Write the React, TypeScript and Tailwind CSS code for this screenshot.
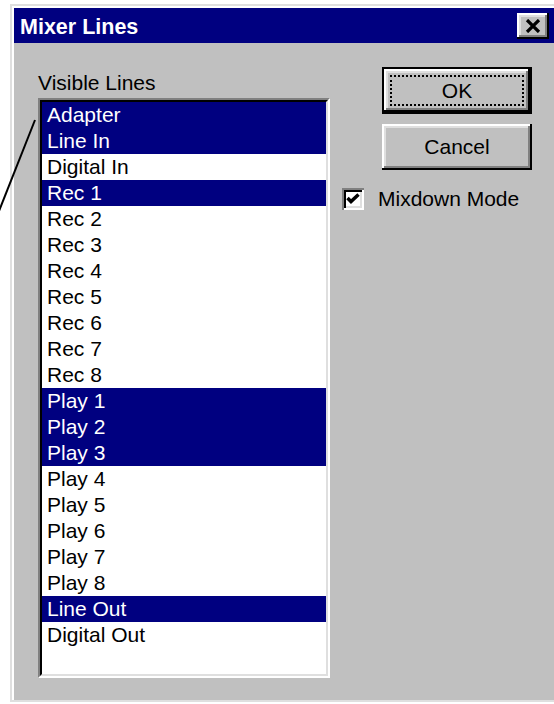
import * as React from "react";

type Line = {label: string; selected: boolean};

const lines: Line[] = [
    {label: "Adapter", selected: true},
    {label: "Line In", selected: true},
    {label: "Digital In", selected: false},
    {label: "Rec 1", selected: true},
    {label: "Rec 2", selected: false},
    {label: "Rec 3", selected: false},
    {label: "Rec 4", selected: false},
    {label: "Rec 5", selected: false},
    {label: "Rec 6", selected: false},
    {label: "Rec 7", selected: false},
    {label: "Rec 8", selected: false},
    {label: "Play 1", selected: true},
    {label: "Play 2", selected: true},
    {label: "Play 3", selected: true},
    {label: "Play 4", selected: false},
    {label: "Play 5", selected: false},
    {label: "Play 6", selected: false},
    {label: "Play 7", selected: false},
    {label: "Play 8", selected: false},
    {label: "Line Out", selected: true},
    {label: "Digital Out", selected: false},
];

// raised 3d bevel used by the push buttons
const bevel =
    "shadow-[inset_-2px_-2px_0_#000,inset_2px_2px_0_#fff,inset_-4px_-4px_0_#808080,inset_4px_4px_0_#dfdfdf]";

function CloseButton() {
    return (
        <button className={`flex items-center justify-center w-[32px] h-[26px] bg-[#c0c0c0] ${bevel}`}>
            <svg width="16" height="14" viewBox="0 0 16 14">
                <path d="M2 1 L14 13 M14 1 L2 13" stroke="#000" strokeWidth="3.2"/>
            </svg>
        </button>
    );
}

function PushButton({label, isDefault}: {label: string; isDefault?: boolean}) {
    if (isDefault) {
        return (
            <div className="w-[150px] h-[47px] border-2 border-black">
                <button className={`flex w-full h-full p-[6px] bg-[#c0c0c0] ${bevel}`}>
                    <span className="flex flex-1 items-center justify-center border-2 border-dotted border-black text-[21px] text-black">
                        {label}
                    </span>
                </button>
            </div>
        );
    }
    return (
        <button
            className={`flex items-center justify-center w-[150px] h-[46px] bg-[#c0c0c0] text-[21px] text-black ${bevel}`}>
            {label}
        </button>
    );
}

function MixerLinesList() {
    return (
        <div className="w-[292px] h-[580px] border-2 border-t-[#808080] border-l-[#808080] border-r-white border-b-white">
            <div className="h-full bg-white border-2 border-t-black border-l-black border-r-[#dfdfdf] border-b-[#dfdfdf]">
                {lines.map((line) => (
                    <div
                        key={line.label}
                        className={`h-[26px] pl-[5px] text-[21px] leading-[26px] whitespace-nowrap ${
                            line.selected ? "bg-[#000080] text-white" : "text-black"
                        }`}
                    >
                        {line.label}
                    </div>
                ))}
            </div>
        </div>
    );
}

export default function App() {
    return (
        <div
            className="relative w-[554px] h-[704px] overflow-hidden bg-white"
            style={{fontFamily: '"Liberation Sans", Arial, sans-serif'}}
        >
            <div className="ml-[10px] mt-[4px] w-[560px] h-[698px] border-l-2 border-t-2 border-b-2 border-[#dfdfdf]">
                <div className="flex flex-col h-full border-l-2 border-t-2 border-white bg-[#c0c0c0]">
                    {/* caption */}
                    <div className="flex items-center h-[35px] w-[556px] pl-[6px] bg-[#000080]">
                        <span className="flex-1 pt-[4px] leading-[31px] text-[21.5px] font-bold text-white">Mixer Lines</span>
                        <div className="w-[53px]">
                            <CloseButton/>
                        </div>
                    </div>

                    <div className="flex pl-[24px] pt-[24px]">
                        <div className="flex flex-col pt-[3px]">
                            <span className="text-[21px] leading-[26px] text-black">Visible Lines</span>
                            <div className="mt-[2px]">
                                <MixerLinesList/>
                            </div>
                        </div>

                        <div className="flex flex-col ml-[12px]">
                            <div className="flex flex-col gap-[10px] ml-[40px]">
                                <PushButton label="OK" isDefault/>
                                <PushButton label="Cancel"/>
                            </div>
                            <label className="flex items-center gap-[14px] mt-[16px]">
                                <span
                                    className="flex items-center justify-center w-[22px] h-[22px] bg-white shadow-[inset_2px_2px_0_#808080,inset_-2px_-2px_0_#fff,inset_4px_4px_0_#000,inset_-4px_-4px_0_#dfdfdf]">
                                    <svg width="14" height="12" viewBox="0 0 14 12">
                                        <path d="M1.5 5 L5 8.5 L12.5 1.5" fill="none" stroke="#000" strokeWidth="3.5"/>
                                    </svg>
                                </span>
                                <span className="text-[21px] leading-[26px] text-black">Mixdown Mode</span>
                            </label>
                        </div>
                    </div>
                </div>
            </div>

            {/* callout line pointing into the list */}
            <svg className="absolute left-0 top-0 pointer-events-none" width="554" height="704">
                <line x1="35" y1="120" x2="-1" y2="211" stroke="#000" strokeWidth="2"/>
            </svg>
        </div>
    );
}
